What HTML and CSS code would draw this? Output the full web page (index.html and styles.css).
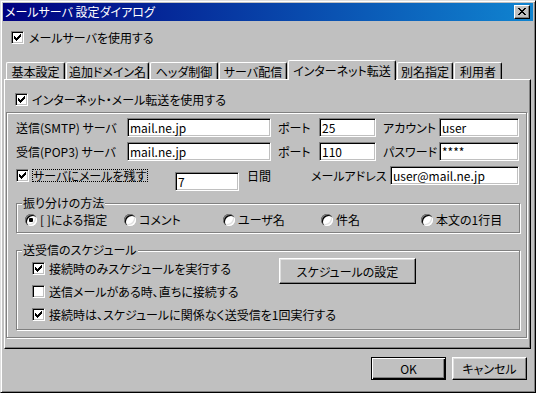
FILE: index.html
```html
<!DOCTYPE html>
<html lang="ja">
<head>
  <meta charset="UTF-8">
  <meta name="viewport" content="width=device-width, initial-scale=1.0">
  <title>メールサーバ 設定ダイアログ</title>
<link rel="stylesheet" href="styles.css">
</head>
<body>
  <div class="window">
    <div class="titlebar">
      <span class="title">メールサーバ 設定ダイアログ</span>
      <span class="close">
        <svg width="8" height="7" viewBox="0 0 8 7" shape-rendering="crispEdges">
          <rect x="0" y="0" width="2" height="1"/><rect x="6" y="0" width="2" height="1"/>
          <rect x="1" y="1" width="2" height="1"/><rect x="5" y="1" width="2" height="1"/>
          <rect x="2" y="2" width="4" height="1"/>
          <rect x="3" y="3" width="2" height="1"/>
          <rect x="2" y="4" width="4" height="1"/>
          <rect x="1" y="5" width="2" height="1"/><rect x="5" y="5" width="2" height="1"/>
          <rect x="0" y="6" width="2" height="1"/><rect x="6" y="6" width="2" height="1"/>
        </svg>
      </span>
    </div>

    <div class="check use-server">
      <span class="box on"></span>
      <span>メールサーバを使用する</span>
    </div>

    <div class="tabs">
      <div class="tab" style="width:59px">基本設定</div>
      <div class="tab" style="width:83px">追加ドメイン名</div>
      <div class="tab" style="width:68px">ヘッダ制御</div>
      <div class="tab" style="width:68px">サーバ配信</div>
      <div class="tab active" style="width:108px">インターネット転送</div>
      <div class="tab" style="width:56px">別名指定</div>
      <div class="tab" style="width:48px">利用者</div>
    </div>

    <div class="panel">
      <div class="check forward">
        <span class="box on"></span>
        <span>インターネット・メール転送を使用する</span>
      </div>

      <div class="etched outer">
        <div class="row">
          <span class="lbl lbl-server">送信(SMTP) サーバ</span>
          <span class="field f-server">mail.ne.jp</span>
          <span class="lbl lbl-port">ポート</span>
          <span class="field f-port">25</span>
          <span class="lbl lbl-account">アカウント</span>
          <span class="field f-account">user</span>
        </div>
        <div class="row">
          <span class="lbl lbl-server">受信(POP3) サーバ</span>
          <span class="field f-server">mail.ne.jp</span>
          <span class="lbl lbl-port">ポート</span>
          <span class="field f-port">110</span>
          <span class="lbl lbl-account">パスワード</span>
          <span class="field f-account">****</span>
        </div>
        <div class="row row-keep">
          <div class="check keep">
            <span class="box on"></span>
            <span class="focus">サーバにメールを残す</span>
          </div>
          <span class="field f-days">7</span>
          <span class="lbl lbl-days">日間</span>
          <span class="lbl lbl-mail">メールアドレス</span>
          <span class="field f-mail">user@mail.ne.jp</span>
        </div>

        <div class="etched group sort">
          <span class="legend">振り分けの方法</span>
          <div class="radios">
            <div class="radio-item" style="width:99px"><span class="radio on"></span>[ ]による指定</div>
            <div class="radio-item" style="width:99px"><span class="radio"></span>コメント</div>
            <div class="radio-item" style="width:98px"><span class="radio"></span>ユーザ名</div>
            <div class="radio-item" style="width:100px"><span class="radio"></span>件名</div>
            <div class="radio-item"><span class="radio"></span>本文の1行目</div>
          </div>
        </div>

        <div class="etched group schedule">
          <span class="legend">送受信のスケジュール</span>
          <div class="sched-body">
            <div class="sched-checks">
              <div class="check sched">
                <span class="box on"></span>
                <span>接続時のみスケジュールを実行する</span>
              </div>
              <div class="check sched">
                <span class="box"></span>
                <span>送信メールがある時、直ちに接続する</span>
              </div>
              <div class="check sched">
                <span class="box on"></span>
                <span>接続時は、スケジュールに関係なく送受信を1回実行する</span>
              </div>
            </div>
            <button class="btn btn-sched">スケジュールの設定</button>
          </div>
        </div>
      </div>
    </div>

    <div class="actions">
      <button class="btn default">OK</button>
      <button class="btn">キャンセル</button>
    </div>
  </div>
</body>
</html>
```

FILE: styles.css
```css
body {
    margin: 0;
    font: 12px "Noto Sans CJK JP", sans-serif;
    font-feature-settings: "palt";
    color: #000;
    background-color: #c0c0c0;
}

.window {
    width: 536px;
    height: 393px;
    box-sizing: border-box;
    padding: 2px;
    background-color: #c0c0c0;
    border: 1px solid;
    border-color: #dfdfdf #000 #000 #dfdfdf;
    box-shadow: inset 1px 1px #fff, inset -1px -1px #808080;
}

/* title bar */
.titlebar {
    height: 18px;
    display: flex;
    align-items: center;
    background: linear-gradient(to right, #000080, #1084d0);
    color: #fff;
    padding-left: 2px;
}

.title {
    line-height: 18px;
    white-space: nowrap;
}

.close {
    margin-left: auto;
    margin-right: 3px;
    width: 16px;
    height: 14px;
    box-sizing: border-box;
    display: flex;
    align-items: center;
    justify-content: center;
    background-color: #c0c0c0;
    border: 1px solid;
    border-color: #fff #000 #000 #fff;
    box-shadow: inset -1px -1px #808080;
    padding: 0 1px 1px 0;
}

.close svg {
    fill: #000;
}

/* checkboxes */
.check {
    display: flex;
    align-items: center;
    height: 19px;
    white-space: nowrap;
}

.box {
    width: 13px;
    height: 13px;
    box-sizing: border-box;
    flex: none;
    margin-right: 4px;
    background-color: #fff;
    border: 1px solid;
    border-color: #808080 #fff #fff #808080;
    box-shadow: inset 1px 1px #000, inset -1px -1px #c0c0c0;
    position: relative;
}

.box.on::after {
    content: "";
    position: absolute;
    left: 2px;
    top: 2px;
    width: 7px;
    height: 7px;
    background: url("data:image/svg+xml,%3Csvg xmlns='http://www.w3.org/2000/svg' width='7' height='7' shape-rendering='crispEdges'%3E%3Cpath d='M0 2h1v3h-1zM1 3h1v3h-1zM2 4h1v3h-1zM3 3h1v3h-1zM4 2h1v3h-1zM5 1h1v3h-1zM6 0h1v3h-1z'/%3E%3C/svg%3E") no-repeat;
}

.use-server {
    margin: 7px 0 0 8px;
}

.use-server .box {
    margin-right: 5px;
}

/* tabs */
.tabs {
    display: flex;
    align-items: flex-end;
    gap: 1px;
    height: 19px;
    margin-top: 13px;
    padding-left: 3px;
}

.tab {
    height: 17px;
    box-sizing: border-box;
    display: flex;
    align-items: center;
    justify-content: center;
    white-space: nowrap;
    border-top: 1px solid #fff;
    border-left: 1px solid #fff;
    border-right: 1px solid #000;
    border-radius: 2px 2px 0 0;
    box-shadow: inset -1px 0 #808080;
    padding-top: 1px;
}

.tab.active {
    height: 20px;
    margin-bottom: -1px;
    position: relative;
    z-index: 1;
    background-color: #c0c0c0;
    padding-bottom: 2px;
}

.panel {
    height: 270px;
    box-sizing: border-box;
    margin: 0 2px 0 1px;
    border: 1px solid;
    border-color: #fff #000 #000 #fff;
    box-shadow: inset -1px -1px #808080;
    padding-top: 10px;
}

.forward {
    margin-left: 10px;
}

/* etched frames */
.etched {
    box-sizing: border-box;
    border: 1px solid #808080;
    box-shadow: inset 1px 1px #fff, 1px 1px #fff;
}

.outer {
    height: 226px;
    margin: 3px 3px 0 1px;
    padding: 5px 0 0 9px;
}

.row {
    display: flex;
    align-items: center;
    height: 19px;
    margin-bottom: 5px;
}

.lbl {
    white-space: nowrap;
    line-height: 19px;
    flex: none;
}

.field {
    height: 19px;
    box-sizing: border-box;
    flex: none;
    background-color: #fff;
    border: 1px solid;
    border-color: #808080 #fff #fff #808080;
    box-shadow: inset 1px 1px #000, inset -1px -1px #c0c0c0;
    padding: 0 2px;
    line-height: 17px;
    white-space: nowrap;
    overflow: hidden;
}

.lbl-server { width: 111px; }
.f-server { width: 144px; }
.lbl-port { width: 41px; margin-left: 7px; }
.f-port { width: 57px; }
.lbl-account { width: 56px; margin-left: 7px; }
.f-account { width: 80px; }

.row-keep {
    align-items: flex-start;
    height: 25px;
}

.keep {
    width: 159px;
}

.focus {
    border: 1px dotted #000;
    line-height: 11px;
    padding: 0 1px 0 0;
    margin-left: -1px;
}

.f-days {
    width: 64px;
    margin-top: 6px;
}

.lbl-days { width: 64px; margin-left: 8px; }
.lbl-mail { width: 79px; }
.f-mail { width: 129px; }

/* group boxes */
.group {
    width: 504px;
    position: relative;
}

.legend {
    position: absolute;
    left: 5px;
    top: -9px;
    padding: 0 1px;
    line-height: 16px;
    background-color: #c0c0c0;
}

.sort {
    height: 30px;
    margin-top: 12px;
    padding: 6px 0 0 8px;
}

.radios {
    display: flex;
    height: 19px;
}

.radio-item {
    display: flex;
    align-items: center;
    white-space: nowrap;
    flex: none;
}

.radio {
    width: 12px;
    height: 12px;
    flex: none;
    margin-right: 3px;
    border-radius: 50%;
    background-color: #fff;
    box-shadow: inset 1px 1px #808080, inset 2px 2px #000, inset -1px -1px #fff, inset -2px -2px #dfdfdf;
    position: relative;
}

.radio.on::after {
    content: "";
    position: absolute;
    left: 4px;
    top: 4px;
    width: 4px;
    height: 4px;
    border-radius: 1px;
    background-color: #000;
}

.schedule {
    height: 80px;
    margin-top: 17px;
    padding: 6px 0 0 15px;
}

.sched-body {
    display: flex;
    align-items: flex-start;
}

.sched-checks {
    width: 247px;
    flex: none;
}

.sched {
    height: 23px;
}

/* buttons */
.btn {
    font: inherit;
    font-feature-settings: "palt";
    color: #000;
    background-color: #c0c0c0;
    box-sizing: border-box;
    padding: 0;
    border: 1px solid;
    border-color: #fff #000 #000 #fff;
    box-shadow: inset -1px -1px #808080, inset 1px 1px #dfdfdf;
}

.btn-sched {
    width: 137px;
    height: 26px;
    margin-top: 1px;
}

.actions {
    display: flex;
    justify-content: flex-end;
    gap: 6px;
    margin-top: 8px;
    padding-right: 6px;
}

.actions .btn {
    width: 75px;
    height: 23px;
}

.actions .btn.default {
    border-color: #000;
    box-shadow: inset 1px 1px #fff, inset -1px -1px #000, inset -2px -2px #808080;
}
```
